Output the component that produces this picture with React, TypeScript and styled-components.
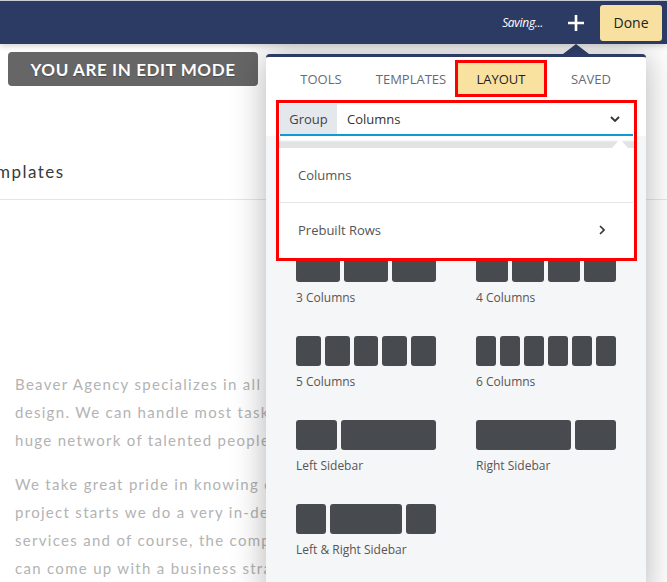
import styled, { createGlobalStyle } from "styled-components";

const NAVY = "#2c3b64";

const GlobalStyle = createGlobalStyle`
  html, body {
    margin: 0;
    padding: 0;
    overflow: hidden;
    background: #fff;
  }
  body {
    font-family: "Open Sans", "Noto Sans", sans-serif;
  }
`;

const Page = styled.div`
  width: 667px;
  height: 582px;
  position: relative;
  overflow: hidden;
`;

const TopBar = styled.header`
  position: relative;
  z-index: 3;
  height: 43px;
  border-top: 1px solid #c9cdd6;
  background: ${NAVY};
  display: flex;
  align-items: center;
  justify-content: flex-end;
  padding-right: 5px;
  box-shadow: 0 2px 6px rgba(0, 0, 0, 0.18);
`;

const Saving = styled.span`
  color: #fff;
  font-style: italic;
  font-size: 12px;
  letter-spacing: -0.3px;
  margin-right: 23px;
`;

const PlusButton = styled.button`
  background: none;
  border: 0;
  padding: 0;
  width: 20px;
  height: 20px;
  display: flex;
  align-items: center;
  justify-content: center;
  margin-right: 14px;
  cursor: pointer;
`;

const DoneButton = styled.button`
  height: 36px;
  width: 62px;
  background: #f7e0a0;
  border: 0;
  border-radius: 3px;
  font-family: "Open Sans", sans-serif;
  font-size: 14px;
  color: #222;
  cursor: pointer;
`;

const Content = styled.main`
  position: relative;
  padding-top: 8px;
`;

const EditBadge = styled.div`
  margin-left: 8px;
  width: 250px;
  height: 34px;
  background: #666;
  border-radius: 4px;
  color: #fff;
  font-family: Lato, sans-serif;
  font-weight: 700;
  font-size: 17px;
  letter-spacing: 0.6px;
  text-transform: uppercase;
  display: flex;
  align-items: center;
  justify-content: center;
  text-shadow: 0 1px 1px rgba(0, 0, 0, 0.3);
`;

const SectionTitle = styled.h2`
  margin: 72px 0 0;
  padding-bottom: 13px;
  border-bottom: 1px solid #e6e6e6;
  font-family: Lato, sans-serif;
  font-weight: 400;
  font-size: 17px;
  line-height: 28px;
  letter-spacing: 1.5px;
  color: #3a3a3a;
  text-indent: -24px;
  white-space: nowrap;
`;

const Copy = styled.div`
  margin-top: 170px;
  padding-left: 15px;
`;

const Paragraph = styled.p`
  margin: 0 0 16px;
  font-family: Lato, sans-serif;
  font-size: 15px;
  line-height: 28px;
  letter-spacing: 1.3px;
  color: #b3b3b3;
  white-space: nowrap;
`;

const Panel = styled.section`
  position: absolute;
  top: 10px;
  left: 266px;
  width: 380px;
  z-index: 2;
  background: #f5f6f8;
  border-top: 3px solid ${NAVY};
  border-radius: 4px 4px 0 0;
  box-shadow: 0 0 34px rgba(0, 0, 0, 0.3);

  &::before {
    content: "";
    position: absolute;
    top: -13px;
    left: 297px;
    border-left: 13px solid transparent;
    border-right: 13px solid transparent;
    border-bottom: 10px solid ${NAVY};
  }
`;

const PanelHeader = styled.div`
  background: #fff;
  padding: 6px 9px 0 10px;
  border-radius: 4px 4px 0 0;
`;

const Tabs = styled.nav`
  display: grid;
  grid-template-columns: repeat(4, 90px);
`;

const Tab = styled.button<{ $active?: boolean }>`
  height: 31px;
  margin: 0 2px;
  border: 0;
  padding: 0;
  font-family: "Open Sans", sans-serif;
  font-size: 13px;
  text-transform: uppercase;
  background: ${(p) => (p.$active ? "#f9e2a0" : "transparent")};
  color: ${(p) => (p.$active ? "#222" : "#646c7a")};
  outline: ${(p) => (p.$active ? "3px solid #ff0000" : "none")};
  cursor: pointer;
`;

const SelectWrap = styled.div`
  position: relative;
  z-index: 2;
  margin-top: 6px;
  border: 3px solid #ff0000;
  border-bottom: 0;
  padding: 1px 1px 0;
  background: #fff;
`;

const Select = styled.div`
  display: flex;
  align-items: stretch;
  height: 30px;
  border-bottom: 2px solid #0e9bd2;
  background: #fff;
`;

const GroupLabel = styled.span`
  width: 57px;
  background: #e4e7ec;
  font-size: 13px;
  color: #444;
  display: flex;
  align-items: center;
  justify-content: center;
`;

const SelectValue = styled.span`
  flex: 1;
  padding: 0 13px 0 10px;
  font-size: 13px;
  color: #333;
  display: flex;
  align-items: center;
  justify-content: space-between;
`;

const Menu = styled.div`
  position: absolute;
  top: 100%;
  left: -3px;
  right: -3px;
  border: 3px solid #ff0000;
  border-top: 0;
  padding: 12px 1px 1px;
  background: linear-gradient(#fff 0, #fff 4px, #e2e3e5 6px, #e2e3e5 12px, #fff 12px);
`;

const MenuList = styled.ul`
  position: relative;
  list-style: none;
  margin: 0;
  padding: 0;
  background: #fff;

  &::before {
    content: "";
    position: absolute;
    top: -9px;
    right: 5px;
    border-left: 8px solid transparent;
    border-right: 8px solid transparent;
    border-bottom: 9px solid #fff;
  }
`;

const MenuItem = styled.li`
  height: 54px;
  padding: 0 28px 0 18px;
  display: flex;
  align-items: center;
  justify-content: space-between;
  font-size: 13px;
  color: #555;

  & + & {
    border-top: 1px solid #e6e6e6;
  }
`;

const PanelBody = styled.div`
  padding: 32px 0 40px 30px;
  display: grid;
  grid-template-columns: 140px 140px;
  column-gap: 40px;
  row-gap: 28px;
`;

const LayoutItem = styled.div`
  display: flex;
  flex-direction: column;
`;

const Preview = styled.div`
  display: flex;
  gap: 4px;
  height: 30px;
`;

const Block = styled.span<{ $grow: number }>`
  flex: ${(p) => p.$grow} 1 0;
  background: #474b4f;
  border-radius: 3px;
`;

const Label = styled.span`
  margin-top: 6px;
  line-height: 20px;
  font-size: 12px;
  color: #555;
`;

const layouts = [
  { label: "1 Column", cols: [1] },
  { label: "2 Columns", cols: [1, 1] },
  { label: "3 Columns", cols: [1, 1, 1] },
  { label: "4 Columns", cols: [1, 1, 1, 1] },
  { label: "5 Columns", cols: [1, 1, 1, 1, 1] },
  { label: "6 Columns", cols: [1, 1, 1, 1, 1, 1] },
  { label: "Left Sidebar", cols: [30, 70] },
  { label: "Right Sidebar", cols: [70, 30] },
  { label: "Left & Right Sidebar", cols: [22.7, 54.6, 22.7] },
];

const tabs = ["Tools", "Templates", "Layout", "Saved"];

function App() {
  return (
    <Page>
      <GlobalStyle />
      <TopBar>
        <Saving>Saving...</Saving>
        <PlusButton aria-label="Add">
          <svg width="18" height="18" viewBox="0 0 18 18">
            <path d="M9 1v16M1 9h16" stroke="#fff" strokeWidth="2.6" />
          </svg>
        </PlusButton>
        <DoneButton>Done</DoneButton>
      </TopBar>

      <Content>
        <EditBadge>You are in edit mode</EditBadge>
        <SectionTitle>Templates</SectionTitle>
        <Copy>
          <Paragraph>
            Beaver Agency specializes in all aspects of web and graphic
            <br />
            design. We can handle most tasks in-house and we have a
            <br />
            huge network of talented people to help with the rest.
          </Paragraph>
          <Paragraph>
            We take great pride in knowing our clients. Before every
            <br />
            project starts we do a very in-depth analysis of your
            <br />
            services and of course, the competition, so that we
            <br />
            can come up with a business strategy that works.
          </Paragraph>
        </Copy>

        <Panel>
          <PanelHeader>
            <Tabs>
              {tabs.map((t) => (
                <Tab key={t} $active={t === "Layout"}>
                  {t}
                </Tab>
              ))}
            </Tabs>
            <SelectWrap>
              <Select>
                <GroupLabel>Group</GroupLabel>
                <SelectValue>
                  Columns
                  <svg width="10" height="6" viewBox="0 0 10 6">
                    <path d="M1 1l4 4 4-4" fill="none" stroke="#333" strokeWidth="1.8" />
                  </svg>
                </SelectValue>
              </Select>
              <Menu>
                <MenuList>
                  <MenuItem>Columns</MenuItem>
                  <MenuItem>
                    Prebuilt Rows
                    <svg width="6" height="10" viewBox="0 0 6 10">
                      <path d="M1 1l4 4-4 4" fill="none" stroke="#333" strokeWidth="1.6" />
                    </svg>
                  </MenuItem>
                </MenuList>
              </Menu>
            </SelectWrap>
          </PanelHeader>
          <PanelBody>
            {layouts.map((l) => (
              <LayoutItem key={l.label}>
                <Preview>
                  {l.cols.map((c, i) => (
                    <Block key={i} $grow={c} />
                  ))}
                </Preview>
                <Label>{l.label}</Label>
              </LayoutItem>
            ))}
          </PanelBody>
        </Panel>
      </Content>
    </Page>
  );
}

export default App;
